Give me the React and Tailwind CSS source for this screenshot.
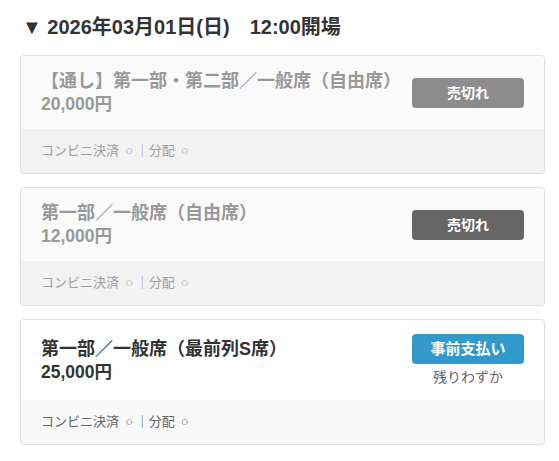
import React from 'react';

const tickets = [
  {
    title: '【通し】第一部・第二部／一般席（自由席）',
    price: '20,000円',
    status: 'soldout',
    btnClass: 'bg-[#8c8c8c]',
  },
  {
    title: '第一部／一般席（自由席）',
    price: '12,000円',
    status: 'soldout',
    btnClass: 'bg-[#666666]',
  },
  {
    title: '第一部／一般席（最前列S席）',
    price: '25,000円',
    status: 'open',
    note: '残りわずか',
  },
];

const Mark = () => <span className="inline-block w-[13px] text-center">○</span>;

const TicketCard = ({ ticket }) => {
  const off = ticket.status === 'soldout';
  return (
    <div className="overflow-hidden rounded-[4px] border border-[#dddddd]">
      <div
        className={`flex items-center justify-between pl-5 pr-5 pt-[14px] pb-[13px] ${
          off ? 'bg-[#fafafa]' : 'bg-white'
        }`}
      >
        <div className={`font-bold text-[18px] leading-[23px] ${off ? 'text-[#999999]' : 'text-[#333333]'}`}>
          <div>{ticket.title}</div>
          <div className="text-[17.5px]">{ticket.price}</div>
        </div>
        <div className="flex flex-col items-center">
          {off ? (
            <button className={`h-[30px] w-[112px] rounded-[4px] text-[14px] font-bold text-white ${ticket.btnClass}`}>
              売切れ
            </button>
          ) : (
            <button className="h-[30px] w-[112px] rounded-[4px] bg-[#3399cc] text-[15px] font-bold text-white">
              事前支払い
            </button>
          )}
          {ticket.note && (
            <div className="mt-[3px] text-[14px] leading-[20px] text-[#666666]">{ticket.note}</div>
          )}
        </div>
      </div>
      <div
        className={`px-5 py-3 text-[13px] leading-[20px] ${
          off ? 'bg-[#f2f2f2] text-[#a0a0a0]' : 'bg-[#f8f8f8] text-[#666666]'
        }`}
      >
        コンビニ決済 <Mark />｜分配 <Mark />
      </div>
    </div>
  );
};

export default function App() {
  return (
    <div
      className="min-h-screen bg-white pl-5 pr-[14px] pt-4"
      style={{ fontFamily: '"Liberation Sans", "Noto Sans CJK JP", sans-serif' }}
    >
      <h2 className="mb-[17px] pl-[2px] text-[20px] font-bold leading-[22px] text-[#333333]">
        ▼ 2026年03月01日(日)　12:00開場
      </h2>
      <div className="flex flex-col gap-[13px]">
        {tickets.map((t) => (
          <TicketCard key={t.title} ticket={t} />
        ))}
      </div>
    </div>
  );
}
